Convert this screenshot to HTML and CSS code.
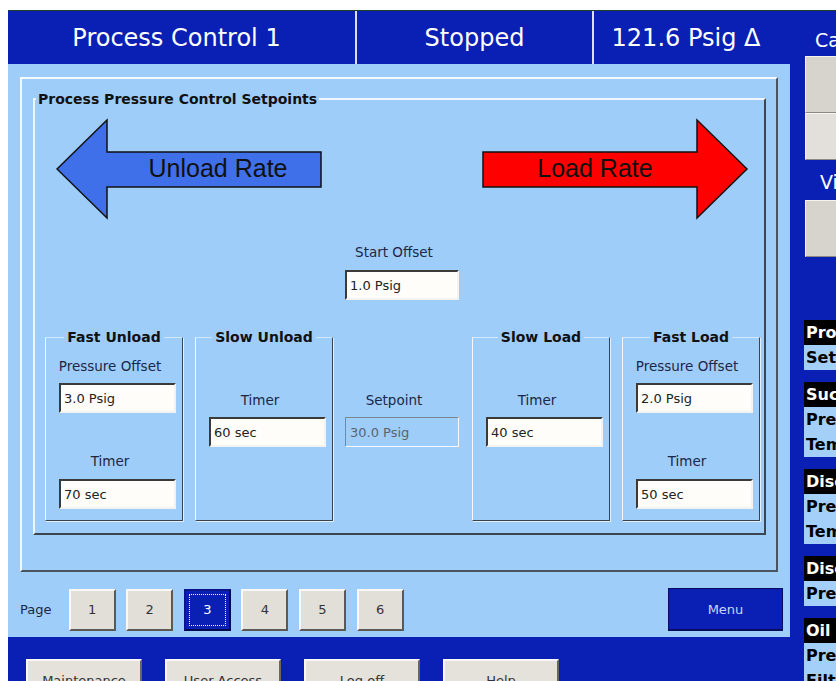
FILE: index.html
```html
<!DOCTYPE html>
<html lang="en">
<head>
  <meta charset="UTF-8" />
  <meta name="viewport" content="width=device-width, initial-scale=1.0" />
  <title>Process Control 1</title>
  <link rel="stylesheet" href="styles.css">
</head>
<body>
  <div class="screen">
    <div class="main">
      <header class="titlebar">
        <div class="title-cell cell-name">Process Control 1</div>
        <div class="title-cell cell-state">Stopped</div>
        <div class="title-cell cell-value">121.6 Psig Δ</div>
      </header>

      <section class="workarea">
        <div class="frame">
          <fieldset class="setpoints">
            <legend>Process Pressure Control Setpoints</legend>

            <div class="arrows">
              <svg class="arrow" width="267" height="102" viewBox="0 0 267 102">
                <polygon points="1,51 51,2 51,34 265,34 265,69 51,69 51,100" fill="#3f6fe9" stroke="#111" stroke-width="1.5" />
                <text x="162" y="59" text-anchor="middle">Unload Rate</text>
              </svg>
              <svg class="arrow" width="267" height="102" viewBox="0 0 267 102">
                <polygon points="1,34 215,34 215,2 265,51 215,100 215,69 1,69" fill="#ff0000" stroke="#111" stroke-width="1.5" />
                <text x="113" y="59" text-anchor="middle">Load Rate</text>
              </svg>
            </div>

            <div class="start-offset">
              <label for="startOffset">Start Offset</label>
              <input type="text" id="startOffset" class="field field-wide" value="1.0 Psig" />
            </div>

            <div class="stages">
              <fieldset class="stage">
                <legend>Fast Unload</legend>
                <label for="fuOffset" class="first">Pressure Offset</label>
                <input type="text" id="fuOffset" class="field" value="3.0 Psig" />
                <label for="fuTimer" class="second">Timer</label>
                <input type="text" id="fuTimer" class="field" value="70 sec" />
              </fieldset>

              <fieldset class="stage">
                <legend>Slow Unload</legend>
                <label for="suTimer" class="only">Timer</label>
                <input type="text" id="suTimer" class="field" value="60 sec" />
              </fieldset>

              <div class="setpoint">
                <label for="setpoint">Setpoint</label>
                <input type="text" id="setpoint" class="field field-wide field-off" value="30.0 Psig" disabled />
              </div>

              <fieldset class="stage">
                <legend>Slow Load</legend>
                <label for="slTimer" class="only">Timer</label>
                <input type="text" id="slTimer" class="field" value="40 sec" />
              </fieldset>

              <fieldset class="stage">
                <legend>Fast Load</legend>
                <label for="flOffset" class="first">Pressure Offset</label>
                <input type="text" id="flOffset" class="field" value="2.0 Psig" />
                <label for="flTimer" class="second">Timer</label>
                <input type="text" id="flTimer" class="field" value="50 sec" />
              </fieldset>
            </div>
          </fieldset>
        </div>

        <div class="pager">
          <span class="pager-label">Page</span>
          <button class="page-btn">1</button>
          <button class="page-btn">2</button>
          <button class="page-btn active"><span>3</span></button>
          <button class="page-btn">4</button>
          <button class="page-btn">5</button>
          <button class="page-btn">6</button>
          <button class="menu-btn">Menu</button>
        </div>
      </section>

      <footer class="toolbar">
        <button class="tool-btn">Maintenance</button>
        <button class="tool-btn">User Access</button>
        <button class="tool-btn">Log off</button>
        <button class="tool-btn">Help</button>
      </footer>
    </div>

    <aside class="side">
      <div class="side-caption">Capacity</div>
      <div class="side-keys">
        <div class="side-key"></div>
        <div class="side-key short"></div>
      </div>
      <div class="side-caption caption-v">Vi</div>
      <div class="side-keys">
        <div class="side-key"></div>
      </div>

      <div class="tags">
        <div class="tag-group">
          <div class="tag tag-head">Process</div>
          <div class="tag tag-item">Setpoint</div>
        </div>
        <div class="tag-group">
          <div class="tag tag-head">Suction</div>
          <div class="tag tag-item">Pressure</div>
          <div class="tag tag-item">Temperature</div>
        </div>
        <div class="tag-group">
          <div class="tag tag-head">Discharge</div>
          <div class="tag tag-item">Pressure</div>
          <div class="tag tag-item">Temperature</div>
        </div>
        <div class="tag-group">
          <div class="tag tag-head">Discharge</div>
          <div class="tag tag-item">Pressure</div>
        </div>
        <div class="tag-group">
          <div class="tag tag-head">Oil</div>
          <div class="tag tag-item">Pressure</div>
          <div class="tag tag-item">Filter</div>
        </div>
      </div>
    </aside>
  </div>
</body>
</html>
```

FILE: styles.css
```css
:root {
  --panel-blue: #0a20b4;
  --screen-blue: #9fcdf9;
  --tag-blue: #a4cff8;
  --key-grey: #e2ded8;
  --edge-light: #f5f9fd;
  --edge-dark: #4a545f;
  --text-dark: #1b2747;
}

* {
  box-sizing: border-box;
}

html, body {
  margin: 0;
  height: 100%;
}

body {
  background: #fff;
  font-family: "DejaVu Sans", Verdana, sans-serif;
  overflow: hidden;
}

.screen {
  display: flex;
  height: 671px;
  margin: 10px 0 0 8px;
  border-top: 1px solid #1b3f2a;
}

.main {
  width: 782px;
  display: flex;
  flex-direction: column;
}

/* title bar */

.titlebar {
  height: 53px;
  display: flex;
  background: var(--panel-blue);
  color: #fff;
  font-size: 24px;
}

.title-cell {
  display: flex;
  align-items: center;
  justify-content: center;
  white-space: nowrap;
}

.cell-name {
  width: 349px;
  padding-right: 10px;
  border-right: 2px solid #d9def2;
}

.cell-state {
  width: 237px;
  border-right: 2px solid #d9def2;
}

.cell-value {
  flex: 1;
  padding-right: 12px;
}

/* work area */

.workarea {
  height: 573px;
  background: var(--screen-blue);
  padding: 13px 12px 0;
}

.frame {
  height: 495px;
  border: 2px solid;
  border-color: var(--edge-light) var(--edge-dark) var(--edge-dark) var(--edge-light);
  padding: 12px 10px 0 11px;
}

.setpoints {
  margin: 0;
  padding: 0 0 12px;
  min-width: 0;
  border: 2px solid;
  border-color: #eef5fc #3d4650 #3d4650 #eef5fc;
}

.setpoints > legend {
  font-size: 14px;
  font-weight: bold;
  line-height: 16px;
  padding: 0 2px;
  margin-left: 1px;
  color: #111;
}

.arrows {
  display: flex;
  justify-content: space-between;
  margin-top: 11px;
  padding: 0 15px 0 21px;
}

.arrow {
  display: block;
}

.arrow text {
  font-family: "Liberation Sans", Arial, sans-serif;
  font-size: 25px;
  fill: #111;
}

label {
  display: block;
  width: 98px;
  font-size: 13.5px;
  line-height: 16px;
  text-align: center;
  white-space: nowrap;
  color: var(--text-dark);
}

.field {
  display: block;
  width: 117px;
  height: 30px;
  margin: 0;
  padding: 0 3px;
  border: 2px solid;
  border-color: #3a3a3a #f2f2f2 #f2f2f2 #3a3a3a;
  background: #fffdf9;
  font-family: "DejaVu Sans", Verdana, sans-serif;
  font-size: 13px;
  color: #222;
}

.field-wide {
  width: 114px;
}

.field-off {
  background: var(--screen-blue);
  border-width: 1px;
  border-color: #7a8894 #f6faff #f6faff #7a8894;
  padding-left: 4px;
  color: #5a6470;
}

.start-offset {
  margin-top: 24px;
  padding-left: 310px;
}

.start-offset .field {
  margin-top: 10px;
}

/* stage boxes */

.stages {
  display: flex;
  gap: 12px;
  margin-top: 29px;
  padding-left: 10px;
}

.stage {
  width: 138px;
  margin: 0;
  padding: 0 0 11px;
  min-width: 0;
  border: 1px solid;
  border-color: rgba(255, 255, 255, 0.55) #3a4450 #3a4450 #f4f8fc;
  box-shadow: 1px 1px 0 rgba(255, 255, 255, 0.7);
}

.stage > legend {
  margin: 0 auto;
  padding: 0 3px;
  font-size: 14px;
  font-weight: bold;
  line-height: 16px;
  color: #111;
}

.stage label {
  width: 120px;
  margin-left: 4px;
}

.stage .field {
  margin: 9px 0 0 13px;
}

.stage .first {
  margin-top: 13px;
}

.stage .second {
  margin-top: 40px;
}

.stage .only {
  margin-top: 47px;
}

.stage .second + .field {
  margin-top: 10px;
}

.setpoint {
  width: 115px;
  padding-top: 63px;
}

.setpoint .field {
  margin-top: 9px;
}

/* pager */

.pager {
  display: flex;
  align-items: center;
  gap: 10.6px;
  margin-top: 16px;
  margin-right: -5px;
}

.pager-label {
  width: 38px;
  font-size: 13px;
  color: var(--text-dark);
}

button {
  font-family: "DejaVu Sans", Verdana, sans-serif;
  cursor: pointer;
}

.page-btn {
  width: 47px;
  height: 42px;
  padding: 0;
  background: var(--key-grey);
  border: 2px solid;
  border-color: #faf8f5 #5c5954 #5c5954 #faf8f5;
  font-size: 13px;
  color: #333;
}

.page-btn.active {
  background: var(--panel-blue);
  border-color: #08168a #020a50 #020a50 #08168a;
  color: #fff;
  padding: 3px;
}

.page-btn.active span {
  display: flex;
  align-items: center;
  justify-content: center;
  height: 100%;
  border: 1px dotted #fff;
}

.menu-btn {
  width: 115px;
  height: 43px;
  margin-left: auto;
  background: var(--panel-blue);
  border: 1px solid #050d5c;
  border-bottom-width: 2px;
  font-size: 13px;
  color: #c9d6fb;
}

/* bottom toolbar */

.toolbar {
  flex: 1;
  display: flex;
  gap: 23px;
  padding: 22px 0 0 18px;
  background: var(--panel-blue);
  overflow: hidden;
}

.tool-btn {
  flex: none;
  width: 116px;
  height: 42px;
  background: #e5e1db;
  border: 2px solid;
  border-color: #faf8f5 #6a6660 #6a6660 #faf8f5;
  font-size: 13px;
  color: #333;
}

/* side panel */

.side {
  flex: 1;
  min-width: 0;
  background: var(--panel-blue);
  padding: 19px 0 0 14px;
  overflow: hidden;
}

.side-caption {
  margin-left: 11px;
  font-size: 19px;
  line-height: 20px;
  color: #fff;
  white-space: nowrap;
}

.caption-v {
  margin-top: 12px;
  margin-left: 16px;
}

.side-keys {
  margin-top: 6px;
  margin-left: 1px;
  width: 80px;
}

.caption-v + .side-keys {
  margin-top: 8px;
}

.side-key {
  height: 57px;
  background: #d7d3cd;
  border: 1px solid;
  border-color: #f6f4f0 #8c8882 #8c8882 #f6f4f0;
}

.side-key.short {
  height: 47px;
  background: #e3e0db;
}

.tags {
  margin-top: 63px;
}

.tag-group {
  margin-bottom: 12px;
}

.tag {
  height: 25px;
  padding-left: 2px;
  font-size: 16px;
  font-weight: bold;
  line-height: 25px;
  white-space: nowrap;
}

.tag-head {
  background: #000;
  color: #fff;
}

.tag-item {
  background: var(--tag-blue);
  color: #000;
}
```
